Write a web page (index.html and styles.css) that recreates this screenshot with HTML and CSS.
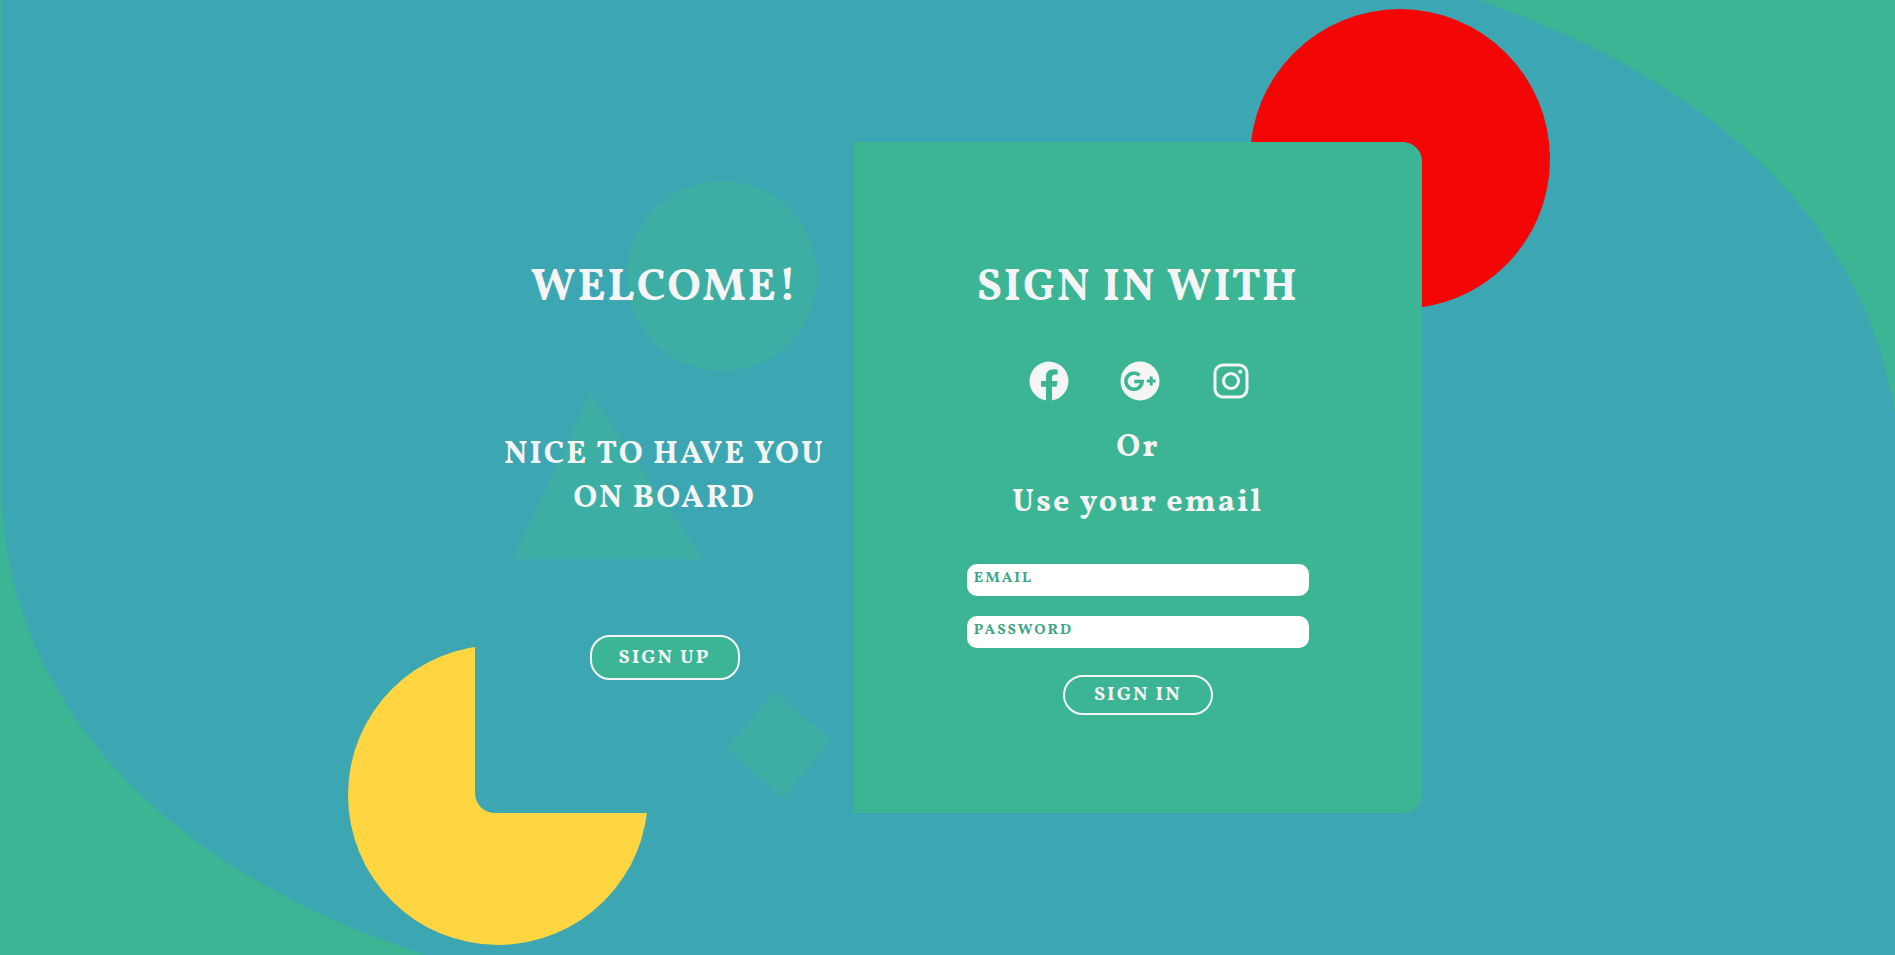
FILE: index.html
```
<!DOCTYPE html>
<html lang="en">
<head>
<meta charset="utf-8">
<meta name="viewport" content="width=device-width, initial-scale=1">
<title>Sign in</title>
<link rel="stylesheet" href="styles.css">
</head>
<body>
<svg class="backdrop" viewBox="0 0 1895 955" preserveAspectRatio="none" aria-hidden="true">
  <path d="M1 0H1478C1740 90 1870 245 1895 415V955H425C150 865 1 690 1 480Z"/>
</svg>
<main class="stage">
  <div class="disc disc-red"></div>
  <div class="disc disc-yellow"></div>
  <div class="card">
    <section class="welcome">
      <svg class="shape shape-circle" viewBox="0 0 190 190" aria-hidden="true"><circle cx="95" cy="95" r="95"/></svg>
      <svg class="shape shape-triangle" viewBox="0 0 190 166" aria-hidden="true"><path d="M77 0L190 166H0Z"/></svg>
      <svg class="shape shape-diamond" viewBox="0 0 105 106" aria-hidden="true"><path d="M48 0L105 48L57 106L0 56Z"/></svg>
      <h1 class="title">WELCOME!</h1>
      <h2 class="tagline">NICE TO HAVE YOU ON BOARD</h2>
      <button class="pill pill-filled" type="button">SIGN UP</button>
    </section>
    <section class="signin">
      <h1 class="title">SIGN IN WITH</h1>
      <div class="socials">
        <a href="#facebook" aria-label="Facebook"><svg class="icon" viewBox="0 0 40 40"><path d="M39.500 20.120a19.500 19.500 0 1 0-22.550 19.260V25.760h-4.950v-5.640h4.950v-4.300c0-4.890 2.910-7.590 7.370-7.590 2.130 0 4.370.38 4.370.38v4.800h-2.460c-2.430 0-3.180 1.500-3.180 3.050v3.660h5.410l-.87 5.640h-4.540v13.620A19.500 19.500 0 0 0 39.500 20.120z"/></svg></a>
        <a href="#google" aria-label="Google Plus"><svg class="icon" viewBox="0 0 40 40"><circle cx="20" cy="20" r="19.500"/><path class="cut" d="M19.500 14.200A8.100 8.100 0 1 0 22.100 20.500H14.200"/><path class="cut thin" d="M26.800 20h8.800M31.200 15.600v8.800"/></svg></a>
        <a href="#instagram" aria-label="Instagram"><svg class="icon line" viewBox="0 0 40 40"><rect x="4" y="4" width="32" height="32" rx="8"/><circle cx="20" cy="20" r="7.500"/><circle class="dot" cx="29.300" cy="10.700" r="2"/></svg></a>
      </div>
      <p class="lead">Or</p>
      <p class="lead">Use your email</p>
      <form class="form">
        <input class="field" type="email" placeholder="EMAIL" aria-label="Email">
        <input class="field" type="password" placeholder="PASSWORD" aria-label="Password">
        <button class="pill" type="button">SIGN IN</button>
      </form>
    </section>
  </div>
</main>
</body>
</html>
```
FILE: styles.css
```
* { box-sizing: border-box; }
body {
  margin: 0;
  background: #3cb595;
  color: #f5f5f5;
  font-family: Vollkorn, "Noto Serif", "Liberation Serif", serif;
  font-weight: 700;
  letter-spacing: 2px;
}
.backdrop {
  position: fixed;
  inset: 0;
  width: 100%;
  height: 100%;
  fill: #3ca7b2;
}
.stage {
  position: relative;
  min-height: 100vh;
  display: grid;
  grid-template-columns: 50%;
  place-content: center;
  padding-left: 2px;
  overflow: hidden;
}
.disc {
  position: absolute;
  width: 300px;
  height: 300px;
  border-radius: 50%;
}
.disc-red { top: 9px; left: calc(66% - 1px); background: #f40606; }
.disc-yellow { bottom: 10px; right: calc(66% - 4px); background: #ffd542; }
.card {
  position: relative;
  display: grid;
  grid-template-columns: 2fr 3fr;
  min-height: calc(70vh + 2px);
  border-radius: 20px;
  overflow: hidden;
  background: #3ca7b2;
}
.welcome, .signin {
  position: relative;
  display: flex;
  flex-direction: column;
  align-items: center;
  text-align: center;
  padding: 115px 16px 0;
}
.signin { background: #3cb595; }
.title, .tagline, .lead { position: relative; margin: 0; }
.title { font-size: 45px; line-height: 64px; white-space: nowrap; }
.tagline { margin-top: 112px; font-size: 32px; line-height: 44px; }
.lead { font-size: 32px; line-height: 55px; }
.shape { position: absolute; fill: #3cb595; opacity: .5; }
.shape-circle { width: 190px; top: 39px; left: 152px; }
.shape-triangle { width: 190px; top: 251px; left: 38px; }
.shape-diamond { width: 105px; top: 550px; left: 251px; }
.pill {
  position: relative;
  width: 150px;
  height: 40px;
  padding: 0;
  border: 2px solid #f5f5f5;
  border-radius: 20px;
  background: transparent;
  color: inherit;
  font: inherit;
  font-size: 20px;
  letter-spacing: 2px;
}
.pill-filled { height: 45px; margin-top: 114px; background: #3cb595; }
.socials { display: flex; gap: 51px; margin: 40px 0 20px; padding-left: 4px; }
.socials a { display: block; height: 40px; }
.icon { display: block; width: 40px; height: 40px; fill: #f5f5f5; }
.icon .cut { fill: none; stroke: #3cb595; stroke-width: 3.600; }
.icon .thin { stroke-width: 3; }
.line { fill: none; stroke: #f5f5f5; stroke-width: 3; }
.line .dot { fill: #f5f5f5; stroke: none; }
.form {
  display: flex;
  flex-direction: column;
  align-items: center;
  gap: 20px;
  width: 100%;
  max-width: 342px;
  margin-top: 33px;
}
.field {
  width: 100%;
  height: 32px;
  padding: 0 7px 4px;
  border: 0;
  border-radius: 10px;
  background: #fff;
  color: #3fa587;
  font: inherit;
  font-size: 15px;
  letter-spacing: 2px;
}
.field::placeholder { color: #3fa587; opacity: 1; }
.form .pill { margin-top: 7px; }
```
